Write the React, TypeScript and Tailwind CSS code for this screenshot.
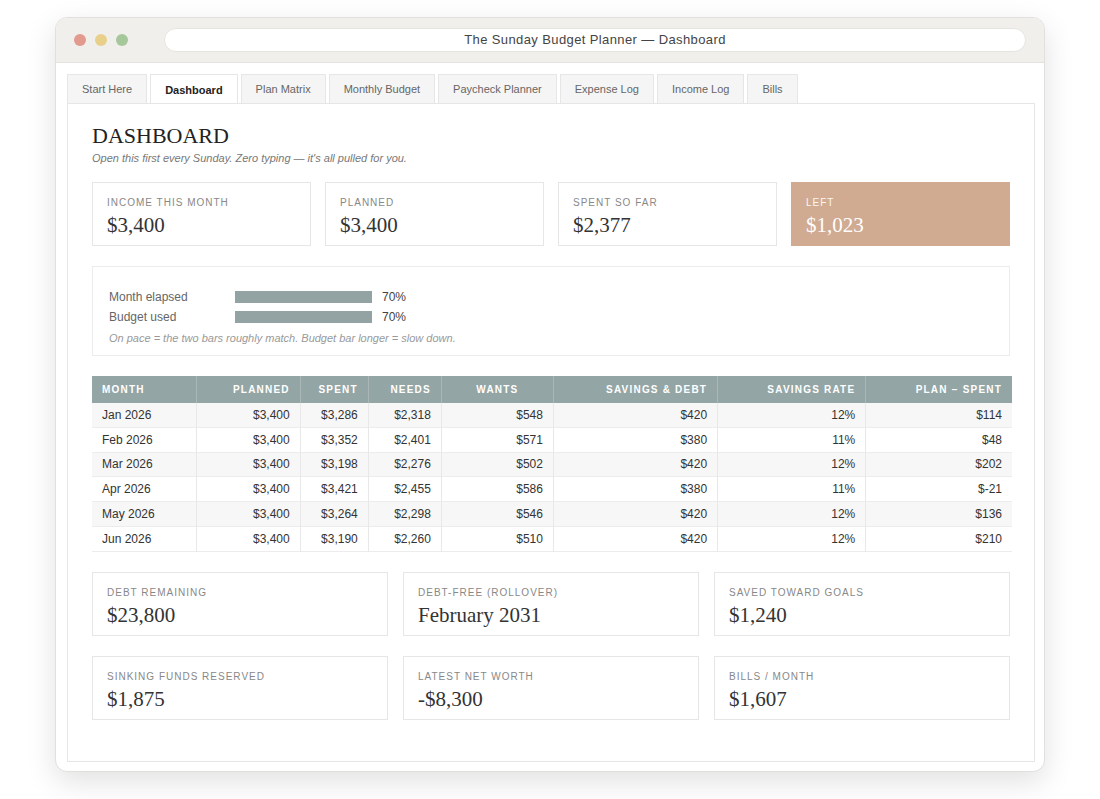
import * as React from 'react';

const tabs = ['Start Here', 'Dashboard', 'Plan Matrix', 'Monthly Budget', 'Paycheck Planner', 'Expense Log', 'Income Log', 'Bills'];

const rows = [
  ['Jan 2026', '$3,400', '$3,286', '$2,318', '$548', '$420', '12%', '$114'],
  ['Feb 2026', '$3,400', '$3,352', '$2,401', '$571', '$380', '11%', '$48'],
  ['Mar 2026', '$3,400', '$3,198', '$2,276', '$502', '$420', '12%', '$202'],
  ['Apr 2026', '$3,400', '$3,421', '$2,455', '$586', '$380', '11%', '$-21'],
  ['May 2026', '$3,400', '$3,264', '$2,298', '$546', '$420', '12%', '$136'],
  ['Jun 2026', '$3,400', '$3,190', '$2,260', '$510', '$420', '12%', '$210'],
];

const heads = ['MONTH', 'PLANNED', 'SPENT', 'NEEDS', 'WANTS', 'SAVINGS & DEBT', 'SAVINGS RATE', 'PLAN − SPENT'];
const widths = ['w-[104px]', 'w-[104px]', 'w-[68px]', 'w-[73px]', 'w-[112px]', 'w-[164px]', 'w-[148px]', 'w-[146px]'];

const serif = { fontFamily: '"Liberation Serif", Georgia, serif' };

const Stat = ({ label, value, accent }: { label: string; value: string; accent?: boolean }) => (
  <div className={`flex-1 h-[64px] px-[14px] pt-[12px] border ${accent ? 'bg-[#d0ab91] border-[#d0ab91] text-white' : 'bg-white border-[#e6e6e6] text-[#333]'}`}>
    <div className={`text-[10px] tracking-[0.1em] ${accent ? 'text-white/90' : 'text-[#888]'}`}>{label}</div>
    <div className="text-[21px] leading-[30px]" style={serif}>{value}</div>
  </div>
);

export default function App() {
  return (
    <div className="w-[1100px] h-[799px] bg-white pt-[17px] pl-[55px]" style={{ fontFamily: '"Liberation Sans", Arial, sans-serif' }}>
      <div className="w-[990px] h-[755px] rounded-[12px] border border-[#e2e0dc] shadow-[0_10px_30px_rgba(0,0,0,0.12)] overflow-hidden bg-white">
        <div className="h-[45px] bg-[#f1efeb] border-b border-[#e4e2de] flex items-center px-[18px]">
          <div className="flex gap-[9px]">
            <span className="w-[12px] h-[12px] rounded-full bg-[#e39a8e]" />
            <span className="w-[12px] h-[12px] rounded-full bg-[#e8cf8a]" />
            <span className="w-[12px] h-[12px] rounded-full bg-[#a6c79a]" />
          </div>
          <div className="ml-[36px] w-[871px] h-[24px] rounded-full bg-white border border-[#e6e4e0] flex items-center justify-center text-[13px] text-[#444] tracking-[0.03em]">
            The Sunday Budget Planner — Dashboard
          </div>
        </div>
        <div className="px-[11px] pt-[11px]">
          <div className="flex gap-[3px]">
            {tabs.map((t) => (
              <div key={t} className={`h-[29px] px-[14px] flex items-center text-[11px] border border-b-0 border-[#e6e6e6] ${t === 'Dashboard' ? 'bg-white font-bold text-[#222] pt-[2px] relative z-10 -mb-px' : 'bg-[#f5f5f5] text-[#666]'}`}>
                {t}
              </div>
            ))}
          </div>
          <div className="w-[968px] h-[659px] border border-[#e6e6e6] px-[24px] pt-[20px]">
            <h1 className="text-[22px] leading-[24px] text-[#222]" style={serif}>DASHBOARD</h1>
            <p className="text-[11px] italic text-[#777] mt-[2px]">Open this first every Sunday. Zero typing — it's all pulled for you.</p>
            <div className="flex gap-[14px] mt-[15px]">
              <Stat label="INCOME THIS MONTH" value="$3,400" />
              <Stat label="PLANNED" value="$3,400" />
              <Stat label="SPENT SO FAR" value="$2,377" />
              <Stat label="LEFT" value="$1,023" accent />
            </div>
            <div className="mt-[20px] h-[90px] border border-[#ececec] px-[16px] pt-[20px] text-[12px] text-[#666]">
              {['Month elapsed', 'Budget used'].map((l) => (
                <div key={l} className="flex items-center h-[20px]">
                  <span className="w-[126px]">{l}</span>
                  <span className="w-[137px] h-[12px] bg-[#93a3a3]" />
                  <span className="ml-[10px] text-[#444]">70%</span>
                </div>
              ))}
              <div className="italic text-[11px] text-[#999] mt-[3px]">On pace = the two bars roughly match. Budget bar longer = slow down.</div>
            </div>
            <table className="mt-[20px] w-[920px] border-collapse text-[12px] text-[#333]">
              <thead>
                <tr className="bg-[#93a5a5] text-white h-[27px]">
                  {heads.map((h, i) => (
                    <th key={h} className={`${widths[i]} text-[10px] font-bold tracking-[0.12em] px-[10px] border-r border-[#a9b7b7] last:border-r-0 ${i === 0 ? 'text-left' : i === 4 ? 'text-center' : 'text-right'}`}>{h}</th>
                  ))}
                </tr>
              </thead>
              <tbody>
                {rows.map((r, ri) => (
                  <tr key={r[0]} className={`h-[24.8px] border-b border-[#ececec] ${ri % 2 === 0 ? 'bg-[#f7f7f7]' : 'bg-white'}`}>
                    {r.map((c, i) => (
                      <td key={i} className={`px-[10px] border-r border-[#e8e8e8] last:border-r-0 ${i === 0 ? 'text-left' : 'text-right'}`}>{c}</td>
                    ))}
                  </tr>
                ))}
              </tbody>
            </table>
            <div className="grid grid-cols-3 gap-[15px] mt-[20px]">
              {[
                ['DEBT REMAINING', '$23,800'],
                ['DEBT-FREE (ROLLOVER)', 'February 2031'],
                ['SAVED TOWARD GOALS', '$1,240'],
              ].map(([l, v]) => <Stat key={l} label={l} value={v} />)}
            </div>
            <div className="grid grid-cols-3 gap-[15px] mt-[20px]">
              {[
                ['SINKING FUNDS RESERVED', '$1,875'],
                ['LATEST NET WORTH', '-$8,300'],
                ['BILLS / MONTH', '$1,607'],
              ].map(([l, v]) => <Stat key={l} label={l} value={v} />)}
            </div>
          </div>
        </div>
      </div>
    </div>
  );
}
